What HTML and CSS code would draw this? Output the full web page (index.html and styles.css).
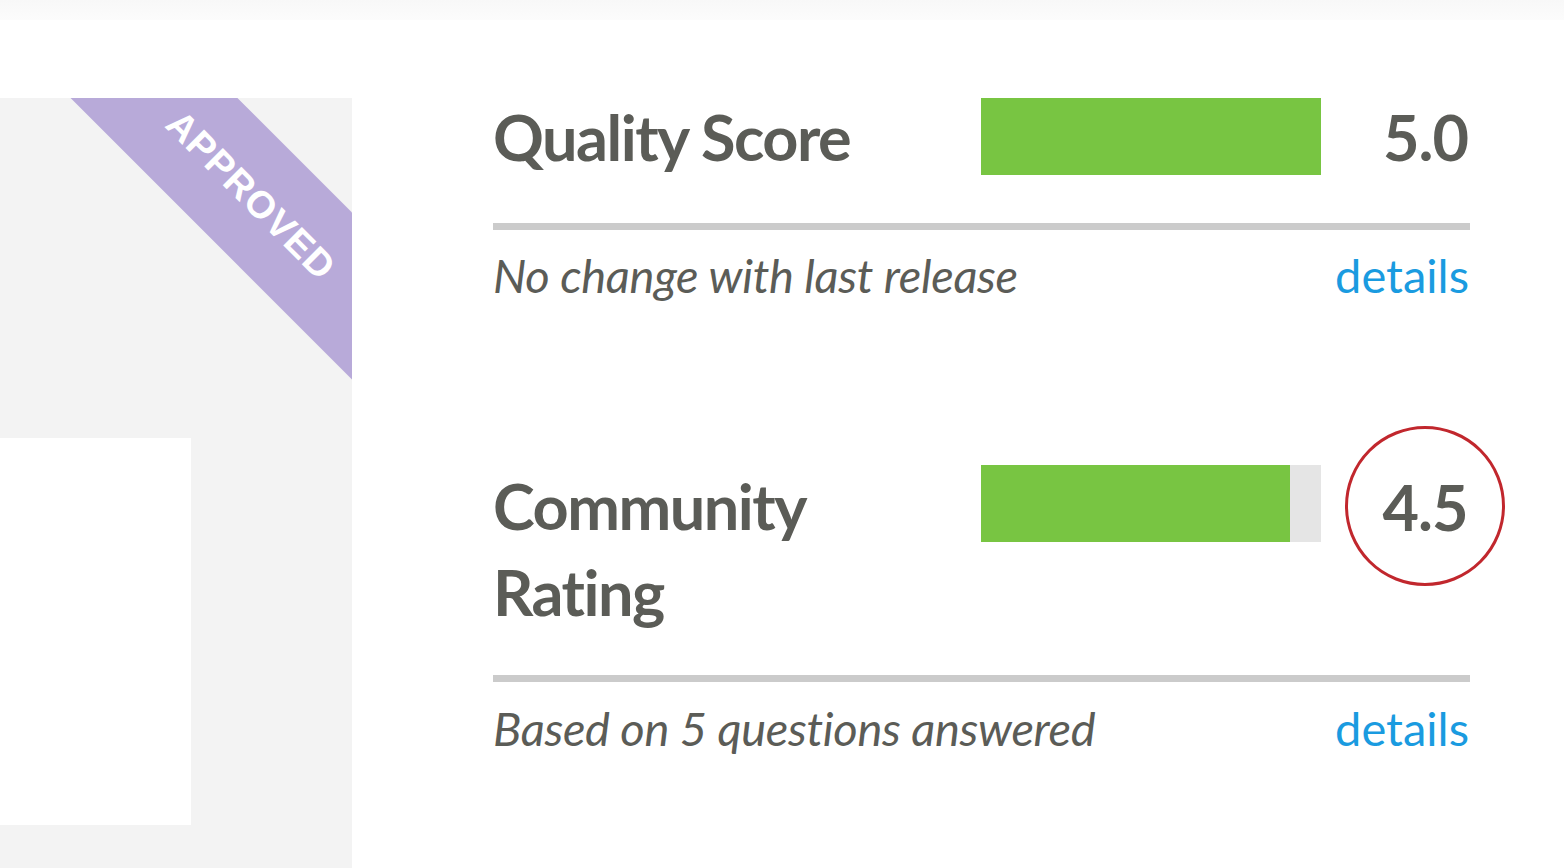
FILE: index.html
```html
<!DOCTYPE html>
<html lang="en">
<head>
<meta charset="utf-8">
<title>Scores</title>
<link rel="stylesheet" href="styles.css">
</head>
<body>
<div class="topbar"></div>
<div class="page">
  <aside class="panel">
    <div class="ribbon"><span>APPROVED</span></div>
    <div class="card"></div>
  </aside>
  <main class="scores">
    <section class="metric metric-quality">
      <div class="metric-head">
        <h2 class="metric-title">Quality Score</h2>
        <div class="bar"><div class="bar-fill" style="width:100%"></div></div>
        <div class="metric-value"><span class="value-text">5.0</span></div>
      </div>
      <div class="rule"></div>
      <div class="metric-foot">
        <em class="note">No change with last release</em>
        <a class="details" href="#">details</a>
      </div>
    </section>
    <section class="metric metric-community">
      <div class="metric-head">
        <h2 class="metric-title">Community Rating</h2>
        <div class="bar"><div class="bar-fill" style="width:91%"></div></div>
        <div class="metric-value"><span class="value-circle">4.5</span></div>
      </div>
      <div class="rule"></div>
      <div class="metric-foot">
        <em class="note">Based on 5 questions answered</em>
        <a class="details" href="#">details</a>
      </div>
    </section>
  </main>
</div>
</body>
</html>
```

FILE: styles.css
```css
html, body {
  margin: 0;
  padding: 0;
  background: #ffffff;
}
body {
  font-family: "Lato", "Open Sans", sans-serif;
  color: #5b5c57;
  width: 1564px;
  height: 868px;
  overflow: hidden;
}
.topbar {
  height: 20px;
  background: linear-gradient(#f8f8f8, #fcfcfc);
}
.page {
  display: flex;
  align-items: flex-start;
}
.panel {
  position: relative;
  overflow: hidden;
  width: 352px;
  height: 770px;
  margin-top: 78px;
  background: #f3f3f3;
  flex: none;
}
.ribbon {
  position: absolute;
  left: -46px;
  top: 41px;
  width: 600px;
  height: 118px;
  background: #b8aad9;
  transform: rotate(45deg);
  display: flex;
  align-items: center;
  justify-content: center;
}
.ribbon span {
  color: #ffffff;
  font-family: "Liberation Sans", Arial, sans-serif;
  font-weight: bold;
  font-size: 38px;
  letter-spacing: 1px;
  margin-left: -8px;
}
.card {
  margin-top: 340px;
  width: 191px;
  height: 387px;
  background: #ffffff;
}
.scores {
  margin-left: 141px;
  width: 977px;
  padding-top: 78px;
}
.metric-head {
  display: flex;
  align-items: flex-start;
}
.metric-title {
  margin: 0;
  width: 487px;
  font-size: 63px;
  font-weight: 700;
  line-height: 77px;
  letter-spacing: -1.5px;
  flex: none;
}
.metric-community .metric-title {
  width: 430px;
  margin-right: 57px;
  line-height: 86px;
  margin-top: -2px;
}
.bar {
  width: 340px;
  height: 77px;
  margin-left: 1px;
  background: #e5e5e5;
  flex: none;
}
.bar-fill {
  height: 100%;
  background: #78c542;
}
.metric-value {
  flex: 1;
  display: flex;
  justify-content: flex-end;
  font-size: 63px;
  font-weight: 700;
  line-height: 77px;
  letter-spacing: -1px;
  padding-right: 2px;
}
.value-circle {
  width: 154px;
  height: 154px;
  border: 3px solid #c1272d;
  border-radius: 50%;
  display: flex;
  align-items: center;
  justify-content: center;
  margin-top: -39px;
  margin-bottom: -39px;
  margin-right: -37px;
  line-height: 1;
}
.rule {
  height: 7px;
  background: #cbcbcb;
}
.metric-quality .rule {
  margin-top: 48px;
}
.metric-community .rule {
  margin-top: 40px;
}
.metric-foot {
  display: flex;
  justify-content: space-between;
  align-items: baseline;
  font-size: 47px;
  line-height: 56px;
  margin-top: 17px;
}
.metric-community .metric-foot {
  margin-top: 18px;
}
.note {
  font-style: italic;
  letter-spacing: -0.3px;
}
.details {
  color: #1a9be0;
  text-decoration: none;
  padding-right: 1px;
}
.metric-community {
  margin-top: 162px;
}
```
